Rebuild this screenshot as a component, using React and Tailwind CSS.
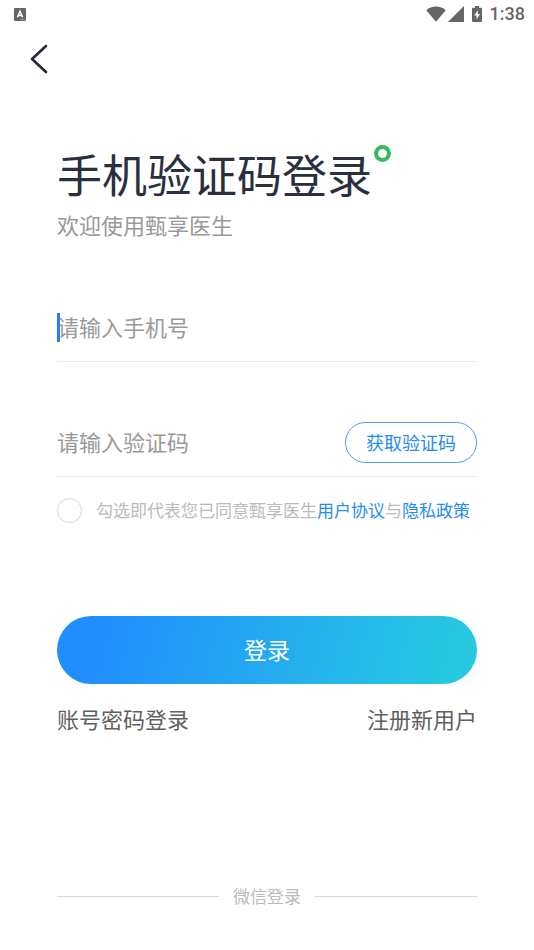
import { useState } from 'react';

function StatusBar() {
  return (
    <div className="flex h-7 items-center justify-between pl-3.5 pr-[9px] text-[#666666]">
      <svg className="h-[13px] w-3" viewBox="0 0 12 13" aria-hidden="true">
        <rect width="12" height="13" rx="1" fill="currentColor" />
        <path d="M3.4 9.300 6 3.200l2.600 6.100M4.400 7.600h3.200" fill="none" stroke="#fff" strokeWidth="1.5" />
        <path d="M6.500 11.500h4" stroke="#fff" strokeWidth="0.6" strokeDasharray="1 0.6" />
      </svg>
      <div className="flex items-center">
        <svg className="h-4 w-5" viewBox="0 0 20 16" fill="currentColor" aria-hidden="true">
          <path d="M0.300 4.200C3 1.800 6.400 0.500 10 0.500s7 1.300 9.700 3.700L10 15.800Z" />
        </svg>
        <svg className="ml-0.5 h-4 w-4" viewBox="0 0 16 16" fill="currentColor" aria-hidden="true">
          <path d="M0 16 16 0v16Z" />
        </svg>
        <svg className="ml-2 h-4 w-2.5" viewBox="0 0 10 16" aria-hidden="true">
          <path
            d="M3 0h4v1.800h2q1 0 1 1V15q0 1-1 1H1q-1 0-1-1V2.800q0-1 1-1h2Z"
            fill="currentColor"
          />
          <path d="M5.800 4 2.300 9.600h2.300V13.500L7.900 8H5.800Z" fill="#fff" />
        </svg>
        <span className="ml-2 font-[Roboto,sans-serif] text-lg leading-7 font-medium">1:38</span>
      </div>
    </div>
  );
}

function Field({ label, type, caret, children }) {
  return (
    <div className="relative flex h-[68px] items-center border-b border-[#ececec]">
      {caret && <span className="absolute top-[19px] left-0 h-[29px] w-[3px] bg-[#2b7ff0]" />}
      <input
        type={type}
        aria-label={label}
        placeholder={label}
        className="h-full w-full min-w-0 flex-1 bg-transparent pb-1 text-[22px] leading-9 text-[#2a2f3f] outline-none placeholder:text-[#999999]"
      />
      {children}
    </div>
  );
}

export default function App() {
  const [agreed, setAgreed] = useState(false);

  return (
    <div className="flex min-h-screen flex-col bg-white font-['Noto_Sans_CJK_SC',sans-serif]">
      <StatusBar />

      <header className="flex h-[62px] items-center px-[30px]">
        <button type="button" aria-label="返回" className="text-[#23293a]">
          <svg className="h-[30px] w-[18px]" viewBox="0 0 18 30" fill="none" aria-hidden="true">
            <path d="M16 2 2 15l14 13" stroke="currentColor" strokeWidth="2.6" strokeLinecap="round" strokeLinejoin="round" />
          </svg>
        </button>
      </header>

      <main className="flex flex-1 flex-col px-[57px] pt-[55px] pb-[42px]">
        <div className="flex items-start gap-0.5">
          <h1 className="text-[45px] leading-[58px] text-[#2a2f3f]">手机验证码登录</h1>
          <span className="h-[17px] w-[17px] rounded-full border-4 border-[#35b95f]" />
        </div>
        <p className="mt-[3px] text-[22px] leading-9 text-[#999999]">欢迎使用甄享医生</p>

        <form className="mt-[52px]" onSubmit={(e) => e.preventDefault()}>
          <Field label="请输入手机号" type="tel" caret />
          <div className="mt-[47px]">
            <Field label="请输入验证码" type="text">
              <button
                type="button"
                className="h-[41px] rounded-full border border-[#4a9df0] px-5 text-[18px] whitespace-nowrap text-[#268cf5]"
              >
                获取验证码
              </button>
            </Field>
          </div>

          <div className="mt-[17px] flex h-8 items-center gap-3.5 text-[17px] whitespace-nowrap text-[#bbbbbb]">
            <input
              id="agree"
              type="checkbox"
              checked={agreed}
              onChange={(e) => setAgreed(e.target.checked)}
              className="h-[25px] w-[25px] shrink-0 appearance-none rounded-full border border-[#d8d8d8] checked:bg-[#268cf5]"
            />
            <label htmlFor="agree">
              勾选即代表您已同意甄享医生<a href="#terms" className="text-[#268cf5]">用户协议</a>与<a href="#privacy" className="text-[#268cf5]">隐私政策</a>
            </label>
          </div>

          <button
            type="submit"
            className="mt-[90px] h-[68px] w-full rounded-full bg-linear-105/srgb from-[#218eff] from-10% to-[#26c9df] to-95% pb-0.5 text-[23px] text-white"
          >
            登录
          </button>
        </form>

        <div className="mt-4 flex justify-between text-[22px] leading-9 text-[#5f5f5f]">
          <a href="#password">账号密码登录</a>
          <a href="#register">注册新用户</a>
        </div>

        <div className="mt-auto flex items-center gap-3.5 text-[17px] leading-6 text-[#bbbbbb]">
          <span className="h-px flex-1 bg-[#d8d8d8]" />
          <span>微信登录</span>
          <span className="h-px flex-1 bg-[#d8d8d8]" />
        </div>
      </main>
    </div>
  );
}
